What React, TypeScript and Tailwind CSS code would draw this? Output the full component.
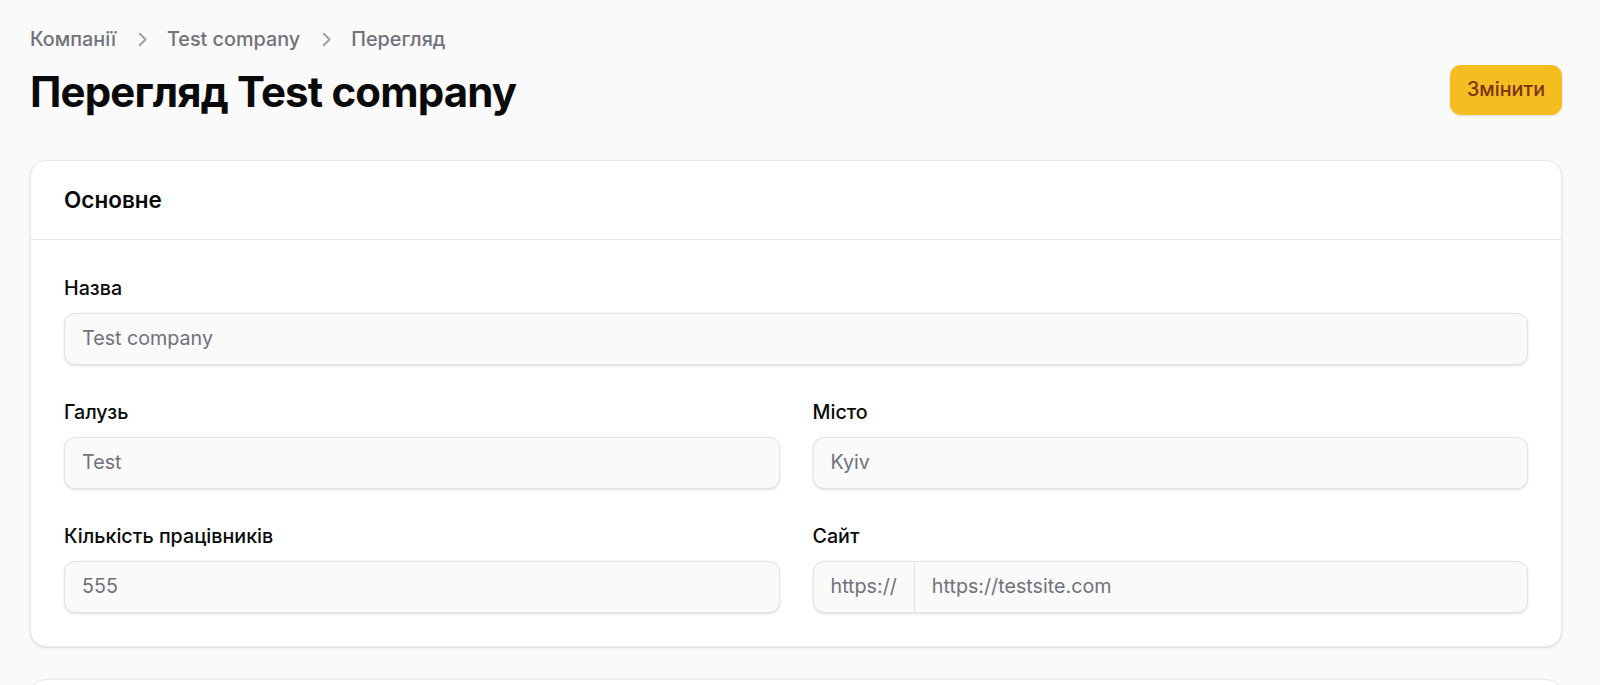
import type { ReactNode } from 'react'

function Chevron() {
  return (
    <svg viewBox="0 0 20 20" fill="currentColor" className="h-[27px] w-[27px] shrink-0 text-[#a1a1aa]">
      <path
        fillRule="evenodd"
        d="M8.22 5.22a.75.75 0 0 1 1.06 0l4.25 4.25a.75.75 0 0 1 0 1.06l-4.25 4.25a.75.75 0 0 1-1.06-1.06L11.94 10 8.22 6.28a.75.75 0 0 1 0-1.06Z"
        clipRule="evenodd"
      />
    </svg>
  )
}

function Field({ label, children, wide }: { label: string; children: ReactNode; wide?: boolean }) {
  return (
    <div className={wide ? 'col-span-2' : ''}>
      <p className="text-[19.7px] font-medium leading-[27px] text-[#0a0a0a]">{label}</p>
      <div className="mt-[11px] flex h-[52px] items-center overflow-hidden rounded-[11px] border border-[#e3e3e5] bg-[#fafafa] shadow-sm">
        {children}
      </div>
    </div>
  )
}

function Value({ text }: { text: string }) {
  return <span className="px-[17px] text-[19.7px] text-[#71717a]">{text}</span>
}

export default function App() {
  const crumbs = ['Компанії', 'Test company', 'Перегляд']

  return (
    <div
      className="min-h-screen bg-[#fafafa] pl-[30px] pr-[38px] pt-[26px]"
      style={{ fontFamily: 'Inter, "Noto Sans", sans-serif' }}
    >
      <nav className="flex h-[27px] items-center gap-[12px]">
        {crumbs.map((c, i) => (
          <div key={c} className="flex items-center gap-[12px]">
            {i > 0 && <Chevron />}
            <span className="text-[19.8px] font-medium leading-[27px] text-[#71717a]">{c}</span>
          </div>
        ))}
      </nav>

      <div className="mt-[12px] flex h-[50px] items-center justify-between">
        <h1 className="pt-[3px] text-[42px] font-bold leading-[50px] tracking-[-0.02em] text-[#0a0a0a]">
          Перегляд Test company
        </h1>
        <button className="h-[50px] rounded-[11px] bg-[#f5bd1f] px-[17px] text-[19.7px] font-medium text-[#7a3410] shadow-sm">
          Змінити
        </button>
      </div>

      <section className="mt-[45px] rounded-[16px] border border-[#e9e9eb] bg-white shadow-sm">
        <header className="flex h-[79px] items-center border-b border-[#e6e6e8] px-[33px]">
          <h2 className="text-[22.5px] font-semibold text-[#0a0a0a]">Основне</h2>
        </header>
        <div className="grid grid-cols-2 gap-x-[33px] gap-y-[34px] px-[33px] pb-[33px] pt-[35px]">
          <Field label="Назва" wide>
            <Value text="Test company" />
          </Field>
          <Field label="Галузь">
            <Value text="Test" />
          </Field>
          <Field label="Місто">
            <Value text="Kyiv" />
          </Field>
          <Field label="Кількість працівників">
            <Value text="555" />
          </Field>
          <Field label="Сайт">
            <span className="flex h-full items-center border-r border-[#e3e3e5] px-[17px] text-[19.7px] text-[#71717a]">
              https://
            </span>
            <Value text="https://testsite.com" />
          </Field>
        </div>
      </section>

      <section className="mt-[32px] h-[200px] rounded-[16px] border border-[#e9e9eb] bg-white shadow-sm" />
    </div>
  )
}
